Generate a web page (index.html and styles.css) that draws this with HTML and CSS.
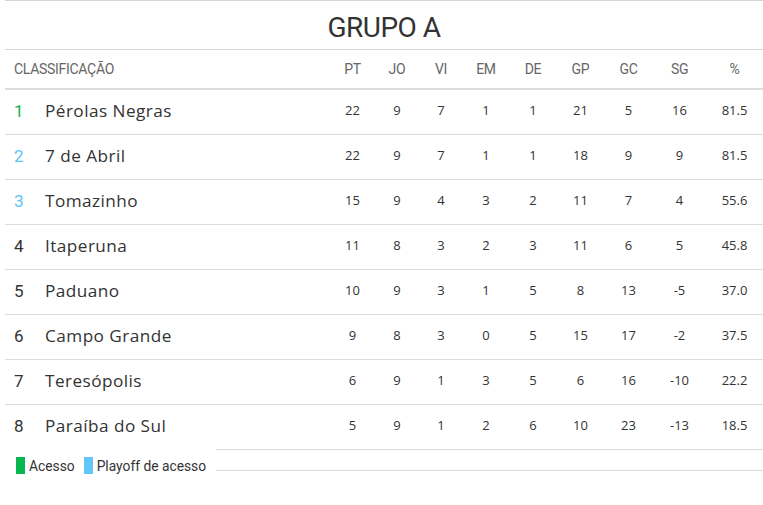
FILE: index.html
```html
<!DOCTYPE html>
<html lang="pt">
<head>
<meta charset="utf-8">
<title>Grupo A</title>
<link rel="stylesheet" href="styles.css">
</head>
<body>
<div class="standings">
  <h1 class="title">GRUPO A</h1>
  <div class="row head">
    <div class="cls">CLASSIFICAÇÃO</div>
    <div class="n">PT</div><div class="n">JO</div><div class="n">VI</div><div class="n">EM</div><div class="n">DE</div><div class="n">GP</div><div class="n">GC</div><div class="n">SG</div><div class="n">%</div>
  </div>
  <div class="row"><div class="pos acc">1</div><div class="team">Pérolas Negras</div><div class="n">22</div><div class="n">9</div><div class="n">7</div><div class="n">1</div><div class="n">1</div><div class="n">21</div><div class="n">5</div><div class="n">16</div><div class="n">81.5</div></div>
  <div class="row"><div class="pos po">2</div><div class="team">7 de Abril</div><div class="n">22</div><div class="n">9</div><div class="n">7</div><div class="n">1</div><div class="n">1</div><div class="n">18</div><div class="n">9</div><div class="n">9</div><div class="n">81.5</div></div>
  <div class="row"><div class="pos po">3</div><div class="team">Tomazinho</div><div class="n">15</div><div class="n">9</div><div class="n">4</div><div class="n">3</div><div class="n">2</div><div class="n">11</div><div class="n">7</div><div class="n">4</div><div class="n">55.6</div></div>
  <div class="row"><div class="pos">4</div><div class="team">Itaperuna</div><div class="n">11</div><div class="n">8</div><div class="n">3</div><div class="n">2</div><div class="n">3</div><div class="n">11</div><div class="n">6</div><div class="n">5</div><div class="n">45.8</div></div>
  <div class="row"><div class="pos">5</div><div class="team">Paduano</div><div class="n">10</div><div class="n">9</div><div class="n">3</div><div class="n">1</div><div class="n">5</div><div class="n">8</div><div class="n">13</div><div class="n">-5</div><div class="n">37.0</div></div>
  <div class="row"><div class="pos">6</div><div class="team">Campo Grande</div><div class="n">9</div><div class="n">8</div><div class="n">3</div><div class="n">0</div><div class="n">5</div><div class="n">15</div><div class="n">17</div><div class="n">-2</div><div class="n">37.5</div></div>
  <div class="row"><div class="pos">7</div><div class="team">Teresópolis</div><div class="n">6</div><div class="n">9</div><div class="n">1</div><div class="n">3</div><div class="n">5</div><div class="n">6</div><div class="n">16</div><div class="n">-10</div><div class="n">22.2</div></div>
  <div class="row last"><div class="pos">8</div><div class="team">Paraíba do Sul</div><div class="n">5</div><div class="n">9</div><div class="n">1</div><div class="n">2</div><div class="n">6</div><div class="n">10</div><div class="n">23</div><div class="n">-13</div><div class="n">18.5</div></div>
  <div class="foot">
    <div class="legend">
      <span class="key"><span class="sw sw-acc"></span>Acesso</span>
      <span class="key"><span class="sw sw-po"></span>Playoff de acesso</span>
    </div>
    <div class="rule"></div>
  </div>
</div>
</body>
</html>
```

FILE: styles.css
```css
html, body {
  margin: 0;
  padding: 0;
  background: #fff;
}
body {
  font-family: "Open Sans", "Noto Sans", sans-serif;
  color: #333;
}
.standings {
  margin-left: 5px;
  width: 758px;
  border-top: 1px solid #d6d6d6;
}
.title {
  margin: 0;
  height: 48px;
  line-height: 54px;
  text-align: center;
  font-family: Roboto, "Noto Sans", sans-serif;
  font-weight: 400;
  font-size: 28px;
  letter-spacing: -0.5px;
  color: #333;
  border-bottom: 1px solid #d6d6d6;
}
.row {
  display: grid;
  grid-template-columns: 40px 1fr 45px 44px 44px 46px 48px 47px 49px 53px 57px;
  align-items: center;
  height: 44px;
  border-bottom: 1px solid #dcdcdc;
  font-size: 13px;
}
.row .n {
  padding-bottom: 5px;
}
.row.head {
  height: 38px;
  border-bottom: 2px solid #dcdcdc;
  font-family: Roboto, "Noto Sans", sans-serif;
  font-size: 14px;
  color: #666;
  letter-spacing: -0.3px;
}
.row.head .n {
  padding-bottom: 0;
}
.row.last {
  border-bottom: none;
}
.cls {
  grid-column: 1 / 3;
  padding-left: 9px;
}
.n {
  text-align: center;
}
.pos {
  padding-left: 9px;
  padding-bottom: 2px;
  font-family: Roboto, "Noto Sans", sans-serif;
  font-size: 17px;
  color: #333;
}
.pos.acc { color: #13b24a; }
.pos.po { color: #5cc3f7; }
.team {
  padding-bottom: 3px;
  font-family: "Open Sans", "Noto Sans", sans-serif;
  font-size: 17.2px;
  letter-spacing: 0.45px;
  color: #333;
}
.foot {
  display: flex;
  align-items: flex-start;
}
.legend {
  width: 211px;
  display: flex;
  gap: 9px;
  padding: 8px 0 0 11px;
  box-sizing: border-box;
  font-family: Roboto, "Noto Sans", sans-serif;
  font-size: 13.8px;
  color: #333;
}
.key {
  display: flex;
  align-items: center;
  gap: 4px;
  white-space: nowrap;
}
.sw {
  display: inline-block;
  width: 9px;
  height: 17px;
}
.sw-acc { background: #07b64e; }
.sw-po { background: #62c6fb; }
.rule {
  flex: 1;
  height: 20px;
  border-top: 1px solid #dcdcdc;
  border-bottom: 1px solid #dcdcdc;
}
```
